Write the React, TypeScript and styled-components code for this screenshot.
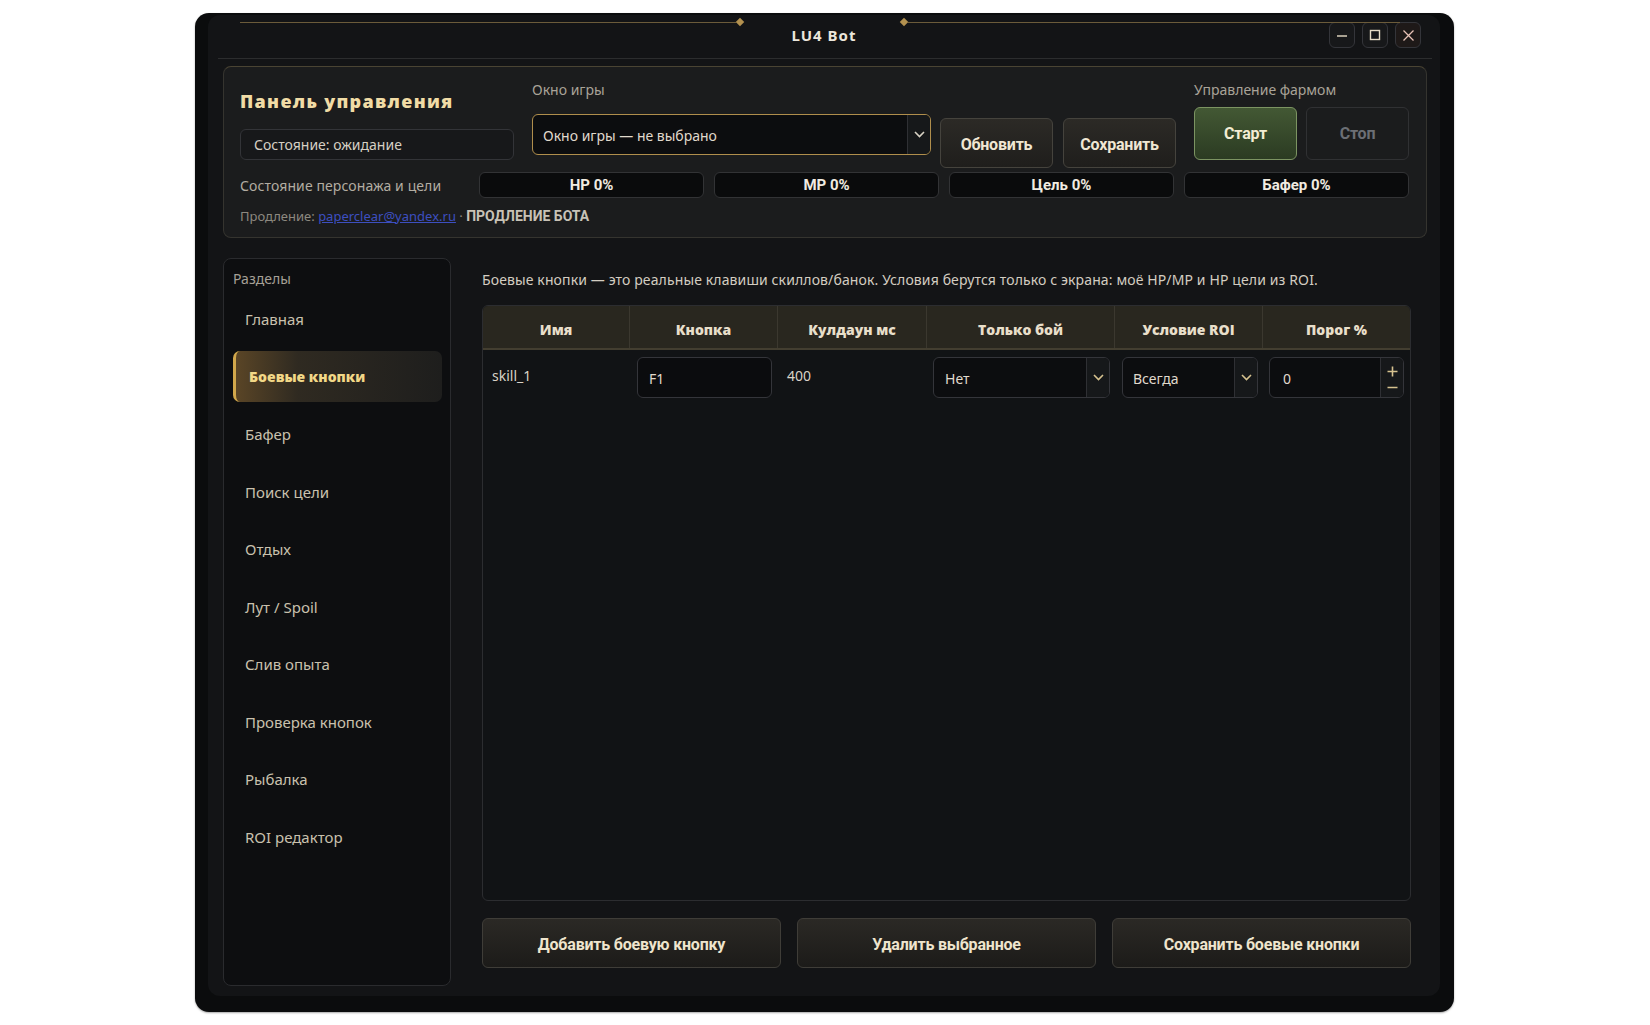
import styled, { createGlobalStyle, css } from 'styled-components';

const GlobalStyle = createGlobalStyle`
  html, body {
    margin: 0;
    background: #ffffff;
  }
  body {
    font-family: 'Noto Sans', 'Open Sans', sans-serif;
    color: #d6d0c4;
  }
  * {
    box-sizing: border-box;
  }
`;

const Desktop = styled.div`
  padding: 13px 0 0 195px;
  min-height: 1025px;
`;

const Window = styled.div`
  width: 1259px;
  height: 999px;
  display: flex;
  padding: 2px 14px 16px 13px;
  background: #0b0c0d;
  border-radius: 14px;
  box-shadow: 0 1px 2px rgba(0, 0, 0, 0.35);
`;

const Frame = styled.div`
  flex: 1;
  display: flex;
  flex-direction: column;
  padding: 0 13px 10px 15px;
  background: #131416;
  border-radius: 12px;
`;

/* ---------- title bar ---------- */

const TitleBar = styled.div`
  position: relative;
  height: 44px;
  margin: 0 -5px;
  padding-right: 11px;
  display: grid;
  grid-template-columns: 1fr auto 1fr;
  align-items: center;
  border-bottom: 1px solid #2c2d2e;
`;

const Ornament = styled.div`
  position: absolute;
  top: 4px;
  left: 22px;
  right: 32px;
  display: flex;
  align-items: center;
  pointer-events: none;
`;

const GoldLine = styled.div<{ $w?: number }>`
  ${(p) => (p.$w ? `width: ${p.$w}px;` : 'flex: 1;')}
  height: 1px;
  background: #6b5b3a;
`;

const Diamond = styled.div`
  width: 6px;
  height: 6px;
  background: #b3914f;
  transform: rotate(45deg);
  margin: 0 1px;
`;

const OrnamentGap = styled.div`
  width: 156px;
`;

const Title = styled.div`
  grid-column: 2;
  margin-left: 9px;
  margin-top: -3px;
  font-family: 'Noto Sans', sans-serif;
  font-weight: 700;
  font-size: 15px;
  letter-spacing: 1px;
  color: #ece7dc;
`;

const WinButtons = styled.div`
  grid-column: 3;
  justify-self: end;
  display: flex;
  gap: 7px;
  margin-top: -3px;
`;

const WinButton = styled.div<{ $close?: boolean }>`
  width: 26px;
  height: 26px;
  display: flex;
  align-items: center;
  justify-content: center;
  border-radius: 6px;
  border: 1px solid #34353a;
  background: ${(p) => (p.$close ? '#1e1918' : '#17181a')};
  color: ${(p) => (p.$close ? '#e8c2b6' : '#e6dcc6')};
`;

/* ---------- control panel ---------- */

const Panel = styled.section`
  margin-top: 7px;
  height: 172px;
  padding: 14px 17px 0 16px;
  background: #1b1c1d;
  border: 1px solid #35342f;
  border-top-color: #4a4433;
  border-radius: 8px;
`;

const TopRow = styled.div`
  display: flex;
  align-items: flex-start;
  height: 87px;
`;

const LeftCol = styled.div`
  width: 274px;
  margin-right: 18px;
`;

const PanelTitle = styled.div`
  margin-top: 8px;
  height: 24px;
  font-family: 'Open Sans', sans-serif;
  font-weight: 800;
  font-size: 18px;
  line-height: 24px;
  letter-spacing: 1.3px;
  color: #f1dca6;
  white-space: nowrap;
`;

const StatusBox = styled.div`
  margin-top: 16px;
  height: 31px;
  padding: 0 13px;
  border: 1px solid #333438;
  border-radius: 6px;
  background: #17181a;
  font-size: 14px;
  line-height: 30px;
  color: #d6d0c4;
`;

const FieldLabel = styled.div`
  font-size: 14px;
  line-height: 18px;
  color: #a9a398;
`;

const GameCol = styled.div`
  width: 399px;
`;

const Combo = styled.div<{ $accent?: boolean }>`
  display: flex;
  height: 41px;
  border: 1px solid ${(p) => (p.$accent ? '#b08e4c' : '#34353a')};
  border-radius: 6px;
  background: #0c0d0f;
  overflow: hidden;
`;

const GameCombo = styled(Combo)`
  margin-top: 15px;
`;

const ComboText = styled.div<{ $pad?: number }>`
  flex: 1;
  padding-left: ${(p) => p.$pad ?? 11}px;
  padding-top: 1px;
  font-size: 14px;
  line-height: 39px;
  color: #e0dacd;
  white-space: nowrap;
`;

const ComboArrow = styled.div<{ $gold?: boolean }>`
  width: 23px;
  display: flex;
  align-items: center;
  justify-content: center;
  background: #16181a;
  border-left: 1px solid #2f3034;
  color: ${(p) => (p.$gold ? '#d6c28f' : '#d8d2c4')};
`;

const buttonBase = css`
  display: flex;
  align-items: center;
  justify-content: center;
  border-radius: 6px;
  font-family: Roboto, 'Noto Sans', sans-serif;
  font-weight: 700;
  font-size: 16px;
  letter-spacing: -0.2px;
`;

const ActionButton = styled.div<{ $gap?: number }>`
  ${buttonBase};
  width: 113px;
  height: 50px;
  margin-top: 37px;
  padding-top: 2px;
  margin-left: ${(p) => p.$gap ?? 10}px;
  background: linear-gradient(180deg, #2c2a26 0%, #1f1e1c 100%);
  border: 1px solid #45433d;
  color: #f0e7d3;
`;

const FarmCol = styled.div`
  margin-left: 18px;
  width: 215px;
`;

const FarmButtons = styled.div`
  display: flex;
  gap: 9px;
  margin-top: 8px;
`;

const FarmButton = styled.div<{ $start?: boolean }>`
  ${buttonBase};
  flex: 1;
  height: 53px;
  ${(p) =>
    p.$start
      ? css`
          background: linear-gradient(180deg, #435834 0%, #2b3b22 100%);
          border: 1px solid #7c9462;
          color: #f3edd3;
        `
      : css`
          background: #1b1c1d;
          border: 1px solid #303133;
          color: #6c6f75;
        `}
`;

const BarsRow = styled.div`
  display: flex;
  align-items: center;
  margin-top: 4px;
  height: 26px;
`;

const BarsLabel = styled.div`
  width: 239px;
  font-size: 14px;
  letter-spacing: 0.1px;
  color: #b3ada2;
`;

const Bars = styled.div`
  flex: 1;
  display: flex;
  gap: 10px;
`;

const Bar = styled.div`
  flex: 1;
  height: 26px;
  border: 1px solid #323335;
  border-radius: 6px;
  background: #0a0b0c;
  text-align: center;
  font-family: Roboto, 'Noto Sans', sans-serif;
  font-weight: 700;
  font-size: 15px;
  line-height: 25px;
  color: #f1ece1;
`;

const Renewal = styled.div`
  margin-top: 10px;
  font-size: 13px;
  line-height: 17px;
  color: #8d8980;
`;

const MailLink = styled.a`
  color: #3d4fc0;
  text-decoration: underline;
`;

const RenewalTag = styled.span`
  font-family: Roboto, 'Noto Sans', sans-serif;
  font-weight: 700;
  font-size: 14px;
  color: #c8c2b6;
`;

/* ---------- main area ---------- */

const Main = styled.div`
  flex: 1;
  display: flex;
  margin-top: 20px;
  min-height: 0;
`;

const Sidebar = styled.nav`
  width: 228px;
  padding: 11px 8px 0 9px;
  background: #0d0e10;
  border: 1px solid #2a2b2e;
  border-radius: 8px;
`;

const SidebarLabel = styled.div`
  font-size: 14px;
  line-height: 18px;
  color: #a6a097;
`;

const NavList = styled.div`
  display: flex;
  flex-direction: column;
  gap: 6.5px;
  margin-top: 5.5px;
`;

const NavItem = styled.div<{ $active?: boolean }>`
  height: 51px;
  display: flex;
  align-items: center;
  padding-left: 12px;
  font-size: 15px;
  color: #c9c1ae;
  border-radius: 7px;
  ${(p) =>
    p.$active &&
    css`
      padding-left: 13px;
      border-left: 3px solid #d1a74b;
      background: linear-gradient(90deg, #5a4526 0%, #2f2a21 30%, #1e1e1d 100%);
      font-family: 'Open Sans', sans-serif;
      font-weight: 800;
      font-size: 14px;
      color: #f2d887;
    `}
`;

const Content = styled.div`
  flex: 1;
  display: flex;
  flex-direction: column;
  margin-left: 31px;
  margin-right: 16px;
  padding-bottom: 18px;
`;

const Hint = styled.div`
  margin-top: 13px;
  font-size: 14px;
  line-height: 18px;
  letter-spacing: 0.12px;
  color: #d3cdc1;
  white-space: nowrap;
`;

const Table = styled.div`
  flex: 1;
  margin-top: 16px;
  background: #111315;
  border: 1px solid #2c2d30;
  border-radius: 6px;
  overflow: hidden;
`;

const columns = '147px 148px 149px 188px 148px 1fr';

const HeaderRow = styled.div`
  display: grid;
  grid-template-columns: ${columns};
  height: 44px;
  background: #29271f;
  border-bottom: 2px solid #433e30;
`;

const HeaderCell = styled.div<{ $last?: boolean }>`
  display: flex;
  align-items: center;
  justify-content: center;
  padding-top: 4px;
  border-right: ${(p) => (p.$last ? 'none' : '1px solid #3b382f')};
  font-family: 'Open Sans', sans-serif;
  font-weight: 800;
  font-size: 14px;
  color: #e8dfca;
`;

const BodyRow = styled.div`
  display: grid;
  grid-template-columns: ${columns};
  height: 52px;
`;

const TextCell = styled.div`
  padding: 17px 0 0 9px;
  font-size: 14px;
  line-height: 18px;
  color: #d9d3c7;
`;

const EditCell = styled.div<{ $l: number; $r: number }>`
  padding: 7px ${(p) => p.$r}px 0 ${(p) => p.$l}px;
`;

const Input = styled.div`
  height: 41px;
  padding-left: 11px;
  padding-top: 1px;
  border: 1px solid #34353a;
  border-radius: 6px;
  background: #0b0c0e;
  font-size: 14px;
  line-height: 39px;
  color: #e0dacd;
`;

const SpinButtons = styled.div`
  width: 23px;
  display: flex;
  flex-direction: column;
  align-items: center;
  justify-content: space-around;
  padding: 3px 0;
  background: #16181a;
  border-left: 1px solid #2f3034;
  color: #d6c28f;
`;

const ButtonRow = styled.div`
  display: flex;
  gap: 16px;
  margin-top: 17px;
`;

const BottomButton = styled.div`
  ${buttonBase};
  flex: 1;
  height: 50px;
  padding-top: 2px;
  background: linear-gradient(180deg, #2b2925 0%, #1c1b19 100%);
  border: 1px solid #3f3d38;
  color: #efe5cd;
`;

const Chevron = () => (
  <svg width="11" height="7" viewBox="0 0 11 7" fill="none">
    <path d="M1 1l4.5 4.5L10 1" stroke="currentColor" strokeWidth="1.6" />
  </svg>
);

const navItems = [
  'Главная',
  'Боевые кнопки',
  'Бафер',
  'Поиск цели',
  'Отдых',
  'Лут / Spoil',
  'Слив опыта',
  'Проверка кнопок',
  'Рыбалка',
  'ROI редактор',
];

const headers = ['Имя', 'Кнопка', 'Кулдаун мс', 'Только бой', 'Условие ROI', 'Порог %'];

export default function App() {
  return (
    <>
      <GlobalStyle />
      <Desktop>
        <Window>
          <Frame>
            <TitleBar>
              <Ornament>
                <GoldLine $w={496} />
                <Diamond />
                <OrnamentGap />
                <Diamond />
                <GoldLine />
              </Ornament>
              <Title>LU4 Bot</Title>
              <WinButtons>
                <WinButton>
                  <svg width="12" height="12" viewBox="0 0 12 12">
                    <path d="M1 7h10" stroke="currentColor" strokeWidth="1.4" />
                  </svg>
                </WinButton>
                <WinButton>
                  <svg width="12" height="12" viewBox="0 0 12 12" fill="none">
                    <rect x="1.5" y="1.5" width="9" height="9" stroke="currentColor" strokeWidth="1.4" />
                  </svg>
                </WinButton>
                <WinButton $close>
                  <svg width="13" height="13" viewBox="0 0 13 13">
                    <path d="M1.5 1.5l10 10M11.5 1.5l-10 10" stroke="currentColor" strokeWidth="1.3" />
                  </svg>
                </WinButton>
              </WinButtons>
            </TitleBar>

            <Panel>
              <TopRow>
                <LeftCol>
                  <PanelTitle>Панель управления</PanelTitle>
                  <StatusBox>Состояние: ожидание</StatusBox>
                </LeftCol>
                <GameCol>
                  <FieldLabel>Окно игры</FieldLabel>
                  <GameCombo $accent>
                    <ComboText $pad={10}>Окно игры — не выбрано</ComboText>
                    <ComboArrow>
                      <Chevron />
                    </ComboArrow>
                  </GameCombo>
                </GameCol>
                <ActionButton $gap={9}>Обновить</ActionButton>
                <ActionButton>Сохранить</ActionButton>
                <FarmCol>
                  <FieldLabel>Управление фармом</FieldLabel>
                  <FarmButtons>
                    <FarmButton $start>Старт</FarmButton>
                    <FarmButton>Стоп</FarmButton>
                  </FarmButtons>
                </FarmCol>
              </TopRow>
              <BarsRow>
                <BarsLabel>Состояние персонажа и цели</BarsLabel>
                <Bars>
                  <Bar>HP 0%</Bar>
                  <Bar>MP 0%</Bar>
                  <Bar>Цель 0%</Bar>
                  <Bar>Бафер 0%</Bar>
                </Bars>
              </BarsRow>
              <Renewal>
                Продление: <MailLink href="mailto:paperclear@yandex.ru">paperclear@yandex.ru</MailLink> ·{' '}
                <RenewalTag>ПРОДЛЕНИЕ БОТА</RenewalTag>
              </Renewal>
            </Panel>

            <Main>
              <Sidebar>
                <SidebarLabel>Разделы</SidebarLabel>
                <NavList>
                  {navItems.map((item) => (
                    <NavItem key={item} $active={item === 'Боевые кнопки'}>
                      {item}
                    </NavItem>
                  ))}
                </NavList>
              </Sidebar>

              <Content>
                <Hint>
                  Боевые кнопки — это реальные клавиши скиллов/банок. Условия берутся только с экрана: моё HP/MP и HP цели из ROI.
                </Hint>
                <Table>
                  <HeaderRow>
                    {headers.map((h, i) => (
                      <HeaderCell key={h} $last={i === headers.length - 1}>
                        {h}
                      </HeaderCell>
                    ))}
                  </HeaderRow>
                  <BodyRow>
                    <TextCell>skill_1</TextCell>
                    <EditCell $l={7} $r={6}>
                      <Input>F1</Input>
                    </EditCell>
                    <TextCell>400</TextCell>
                    <EditCell $l={6} $r={5}>
                      <Combo>
                        <ComboText>Нет</ComboText>
                        <ComboArrow $gold>
                          <Chevron />
                        </ComboArrow>
                      </Combo>
                    </EditCell>
                    <EditCell $l={7} $r={5}>
                      <Combo>
                        <ComboText $pad={10}>Всегда</ComboText>
                        <ComboArrow $gold>
                          <Chevron />
                        </ComboArrow>
                      </Combo>
                    </EditCell>
                    <EditCell $l={6} $r={6}>
                      <Combo>
                        <ComboText $pad={13}>0</ComboText>
                        <SpinButtons>
                          <svg width="11" height="11" viewBox="0 0 11 11">
                            <path d="M5.5 0.5v10M0.5 5.5h10" stroke="currentColor" strokeWidth="1.6" />
                          </svg>
                          <svg width="11" height="3" viewBox="0 0 11 3">
                            <path d="M0.5 1.5h10" stroke="currentColor" strokeWidth="1.6" />
                          </svg>
                        </SpinButtons>
                      </Combo>
                    </EditCell>
                  </BodyRow>
                </Table>
                <ButtonRow>
                  <BottomButton>Добавить боевую кнопку</BottomButton>
                  <BottomButton>Удалить выбранное</BottomButton>
                  <BottomButton>Сохранить боевые кнопки</BottomButton>
                </ButtonRow>
              </Content>
            </Main>
          </Frame>
        </Window>
      </Desktop>
    </>
  );
}
